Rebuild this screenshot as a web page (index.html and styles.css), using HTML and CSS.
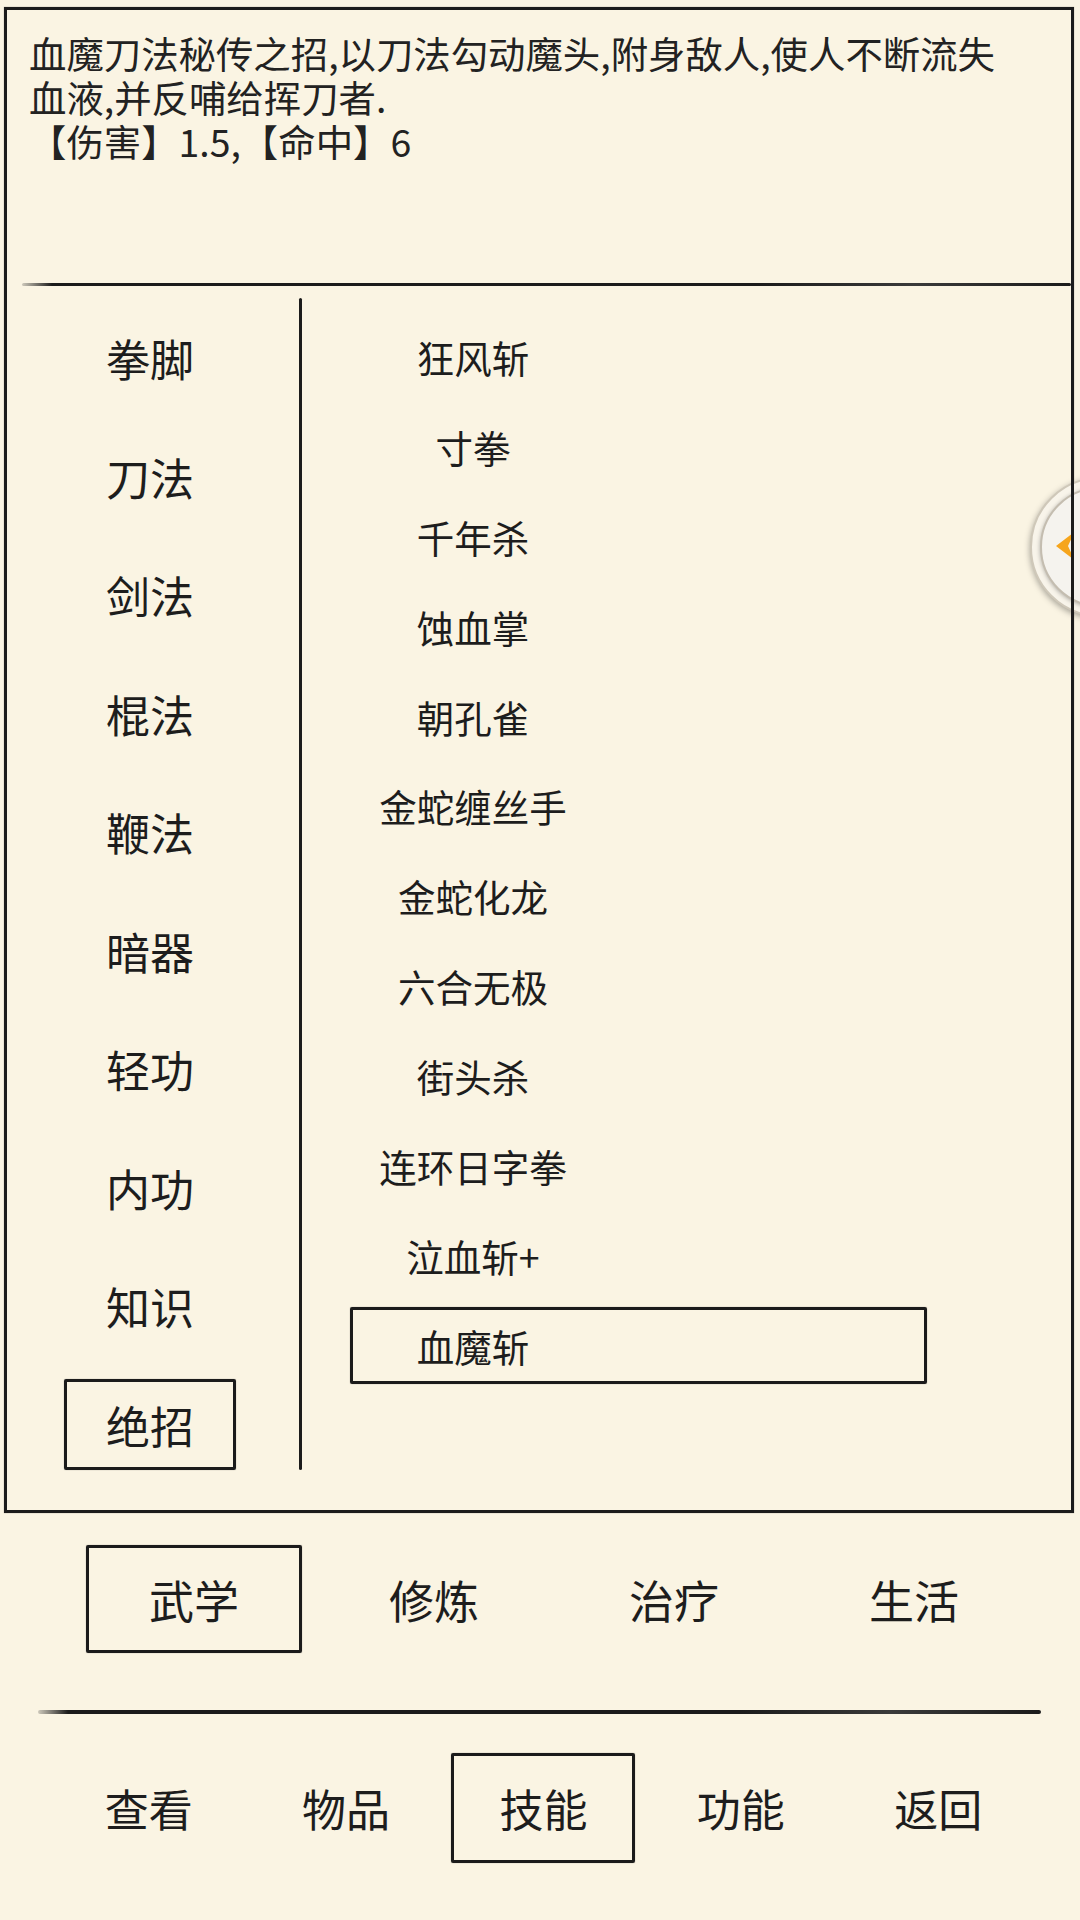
FILE: index.html
```html
<!DOCTYPE html>
<html lang="zh">

<head>
    <meta charset="UTF-8">
    <meta name="viewport" content="width=device-width, initial-scale=1.0">
    <title>技能</title>
    <link rel="stylesheet" href="styles.css">
</head>

<body>
    <div class="panel">
        <div class="desc">
            <p>血魔刀法秘传之招,以刀法勾动魔头,附身敌人,使人不断流失</p>
            <p>血液,并反哺给挥刀者.</p>
            <p>【伤害】1.5,【命中】6</p>
        </div>
        <div class="rule"></div>

        <div class="lists">
            <div class="cats">
                <div class="cat">拳脚</div>
                <div class="cat">刀法</div>
                <div class="cat">剑法</div>
                <div class="cat">棍法</div>
                <div class="cat">鞭法</div>
                <div class="cat">暗器</div>
                <div class="cat">轻功</div>
                <div class="cat">内功</div>
                <div class="cat">知识</div>
                <div class="cat"><span class="cat-box selected">绝招</span></div>
            </div>
            <div class="divider"></div>
            <div class="skills">
                <div class="skill"><div class="skill-box"><span class="skill-name">狂风斩</span></div></div>
                <div class="skill"><div class="skill-box"><span class="skill-name">寸拳</span></div></div>
                <div class="skill"><div class="skill-box"><span class="skill-name">千年杀</span></div></div>
                <div class="skill"><div class="skill-box"><span class="skill-name">蚀血掌</span></div></div>
                <div class="skill"><div class="skill-box"><span class="skill-name">朝孔雀</span></div></div>
                <div class="skill"><div class="skill-box"><span class="skill-name">金蛇缠丝手</span></div></div>
                <div class="skill"><div class="skill-box"><span class="skill-name">金蛇化龙</span></div></div>
                <div class="skill"><div class="skill-box"><span class="skill-name">六合无极</span></div></div>
                <div class="skill"><div class="skill-box"><span class="skill-name">街头杀</span></div></div>
                <div class="skill"><div class="skill-box"><span class="skill-name">连环日字拳</span></div></div>
                <div class="skill"><div class="skill-box"><span class="skill-name">泣血斩+</span></div></div>
                <div class="skill"><div class="skill-box selected"><span class="skill-name">血魔斩</span></div></div>
            </div>
        </div>

        <!-- floating side button -->
        <div class="float-btn">
            <div class="float-inner"></div>
            <svg class="float-arrow" width="20" height="30" viewBox="0 0 20 30">
                <path d="M1 15 L18 2 Q19 1.5 18.5 3 L13 15 L18.5 27 Q19 28.5 18 28 Z" fill="#f6a51c" />
            </svg>
        </div>
    </div>

    <div class="tabs">
        <div class="tab"><span class="tab-box selected">武学</span></div>
        <div class="tab">修炼</div>
        <div class="tab">治疗</div>
        <div class="tab">生活</div>
    </div>

    <div class="rule rule-wide"></div>

    <div class="nav">
        <div class="nav-item">查看</div>
        <div class="nav-item">物品</div>
        <div class="nav-item"><span class="nav-box selected">技能</span></div>
        <div class="nav-item">功能</div>
        <div class="nav-item">返回</div>
    </div>
</body>

</html>
```

FILE: styles.css
```css
html,
body {
    overflow: hidden;
}

body {
    margin: 0;
    width: 1080px;
    height: 1920px;
    background-color: #faf4e3;
    color: #1d1d1d;
    font-family: "Noto Sans CJK SC", "Noto Sans", sans-serif;
}

.panel {
    position: relative;
    box-sizing: border-box;
    width: 1070px;
    height: 1506px;
    margin: 7px 0 0 4px;
    border: 3px solid #1b1b1b;
    box-shadow: 0 0 1px rgba(0, 0, 0, 0.4);
}

/* right edge is drawn again so it sits over the side button */
.panel::after {
    content: "";
    position: absolute;
    top: -3px;
    bottom: -3px;
    right: -3px;
    width: 3px;
    background: #1b1b1b;
    z-index: 2;
}

.desc {
    box-sizing: border-box;
    height: 273px;
    padding: 26px 20px 0 22px;
    font-size: 37.4px;
    color: #222;
}

.desc p {
    margin: 0;
    height: 44px;
    line-height: 34px;
}

.rule {
    height: 3px;
    margin-left: 15px;
    background: linear-gradient(to right, rgba(27, 27, 27, 0.2), #1b1b1b 30px, #1b1b1b 70%, #3a3a3a 85%, #1b1b1b);
    border-radius: 2px;
}

.lists {
    display: flex;
    height: 1224px;
}

.cats {
    box-sizing: border-box;
    width: 292px;
    padding: 13px 6px 0 0;
}

.cat {
    height: 118.5px;
    display: flex;
    align-items: center;
    justify-content: center;
    font-size: 44px;
}

.cat-box {
    box-sizing: border-box;
    width: 172px;
    height: 91px;
    display: flex;
    align-items: center;
    justify-content: center;
}

.divider {
    width: 3px;
    height: 1172px;
    margin-top: 12px;
    background: #1b1b1b;
    border-radius: 2px;
}

.skills {
    flex: 1;
    padding-top: 29px;
}

.skill {
    box-sizing: border-box;
    height: 89.9px;
    padding-top: 3px;
}

.skill-box {
    box-sizing: border-box;
    width: 577px;
    height: 77px;
    margin-left: 48px;
    border: 3px solid transparent;
    display: flex;
    align-items: center;
}

.skill-name {
    width: 240px;
    text-align: center;
    font-size: 37.5px;
}

.selected {
    border: 3px solid #1b1b1b;
    border-radius: 2px;
    box-shadow: 0 0 1px rgba(0, 0, 0, 0.5);
}

.float-btn {
    position: absolute;
    left: 1023px;
    top: 467px;
    width: 140px;
    height: 140px;
    box-sizing: border-box;
    border-radius: 50%;
    background: #f8f4ea;
    border: 2px solid #cfc8b9;
    box-shadow: 0 2px 6px rgba(0, 0, 0, 0.35);
    z-index: 1;
}

.float-inner {
    position: absolute;
    left: 8px;
    top: 8px;
    width: 120px;
    height: 120px;
    box-sizing: border-box;
    border-radius: 50%;
    background: #f5f3ee;
    border: 2px solid #c4bdb0;
    box-shadow: 0 1px 4px rgba(0, 0, 0, 0.3);
}

.float-arrow {
    position: absolute;
    left: 23px;
    top: 52px;
}

.tabs {
    display: grid;
    grid-template-columns: repeat(4, 240px);
    height: 108px;
    margin-top: 32px;
    padding-left: 74px;
}

.tab {
    display: flex;
    align-items: center;
    justify-content: center;
    font-size: 45px;
}

.tab-box {
    box-sizing: border-box;
    width: 216px;
    height: 108px;
    display: flex;
    align-items: center;
    justify-content: center;
}

.rule-wide {
    width: 1003px;
    height: 4px;
    margin: 57px 0 0 38px;
}

.nav {
    display: grid;
    grid-template-columns: repeat(5, 197.4px);
    height: 110px;
    margin-top: 39px;
    padding-left: 50px;
}

.nav-item {
    display: flex;
    align-items: center;
    justify-content: center;
    font-size: 44px;
}

.nav-box {
    box-sizing: border-box;
    width: 184px;
    height: 110px;
    display: flex;
    align-items: center;
    justify-content: center;
}
```
